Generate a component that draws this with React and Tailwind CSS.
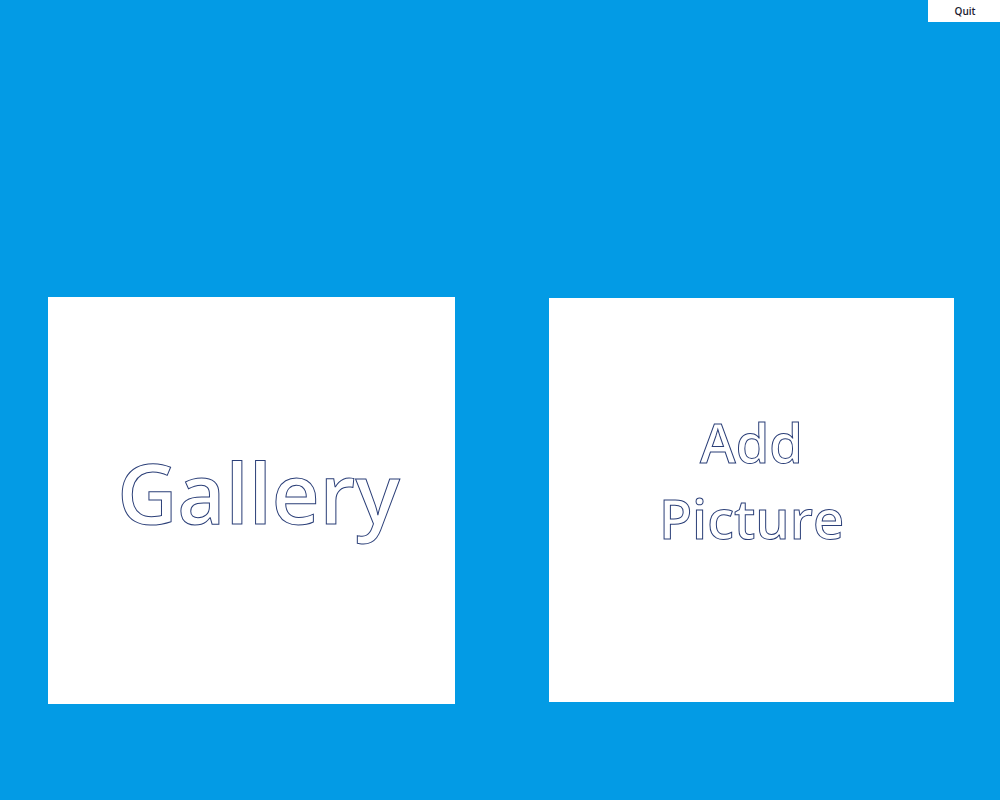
export default function App() {
  return (
    <div className="w-[1000px] h-[800px] bg-[#039be5] flex flex-col overflow-hidden" style={{ fontFamily: '"Open Sans", "Noto Sans", sans-serif' }}>
      <div className="flex justify-end">
        <button className="w-[72px] h-[22px] bg-white text-[10px] font-semibold text-[#1a1a2e] flex items-center justify-center leading-none pl-[2px]">
          Quit
        </button>
      </div>
      <div className="flex items-start pl-[48px] pt-[275px]">
        <div className="w-[407px] h-[407px] bg-white flex items-center justify-center">
          <span className="text-[83px] font-semibold leading-none text-white [-webkit-text-stroke:1px_#2b3f78] pl-[14px] pb-[18px]">Gallery</span>
        </div>
        <div className="ml-[94px] mt-[1px] w-[405px] h-[404px] bg-white flex items-center justify-center">
          <span className="text-[54px] font-semibold leading-[76px] text-white [-webkit-text-stroke:1px_#2b3f78] text-center pb-[40px]">
            Add
            <br />
            Picture
          </span>
        </div>
      </div>
    </div>
  );
}
